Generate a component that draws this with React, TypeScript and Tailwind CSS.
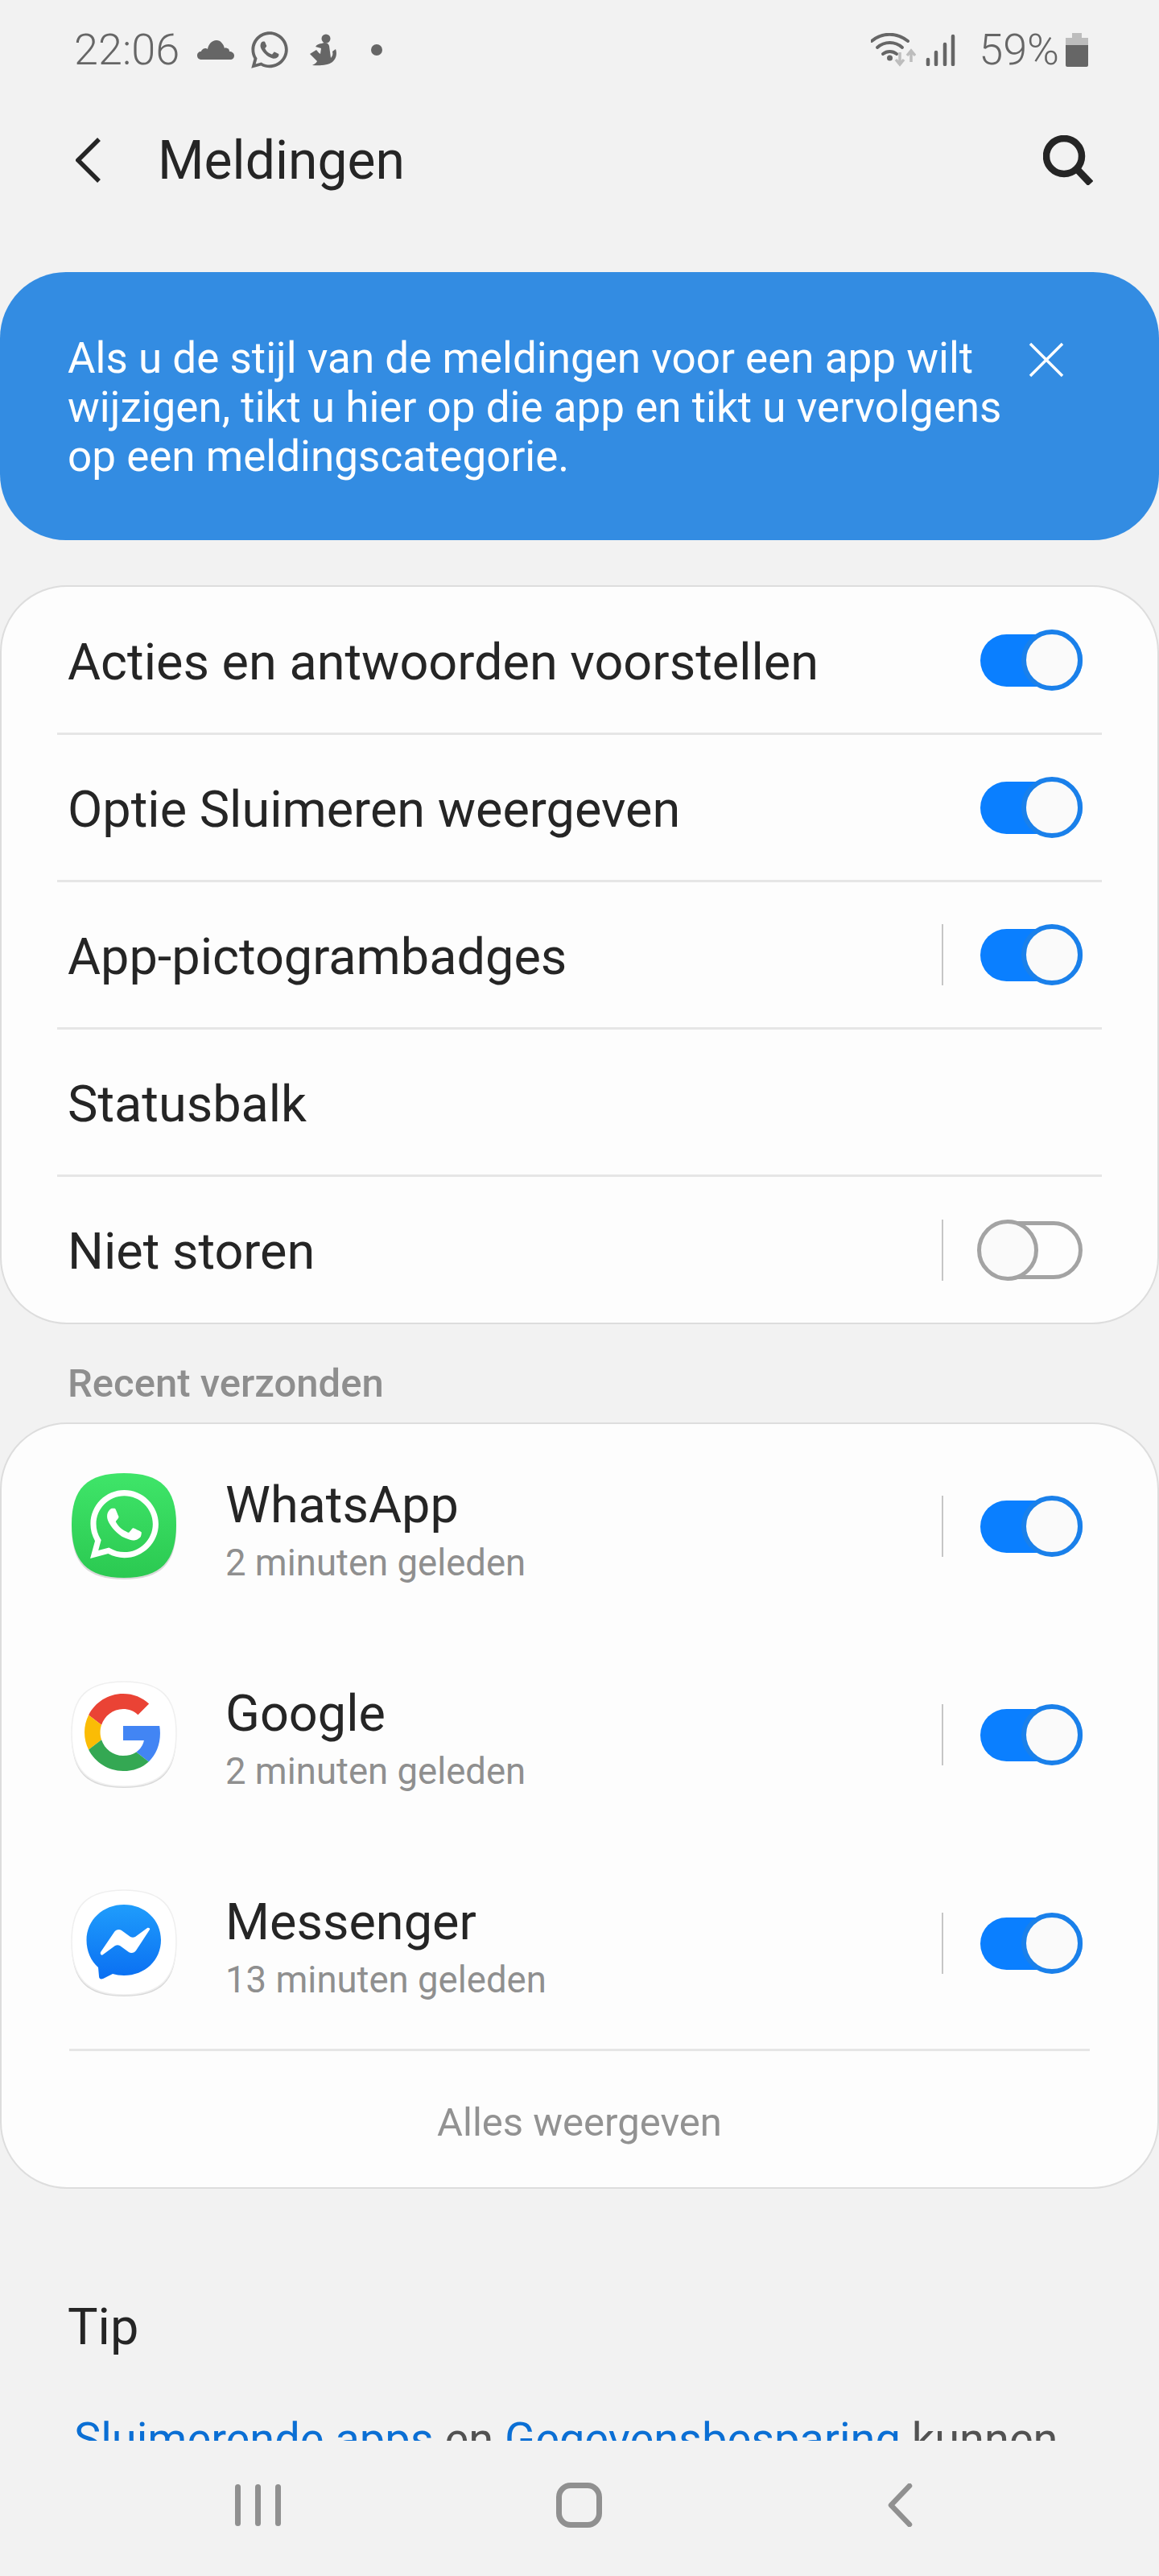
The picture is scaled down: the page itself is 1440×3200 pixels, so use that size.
import React from "react";
import { FaWhatsapp } from "react-icons/fa";

function Toggle({ on = true }: { on?: boolean }) {
  if (on) {
    return (
      <div className="relative h-[65px] w-[127px] shrink-0 rounded-full bg-[#0a7fff]">
        <div className="absolute right-0 top-[-6px] h-[76px] w-[76px] rounded-full border-[6px] border-[#1a80ea] bg-[#fafafa]" />
      </div>
    );
  }
  return (
    <div className="relative h-[72px] w-[127px] shrink-0 rounded-full border-[5px] border-[#a3a3a3] bg-[#fdfdfd]">
      <div className="absolute left-[-9px] top-[-7px] h-[76px] w-[76px] rounded-full border-[5px] border-[#a3a3a3] bg-[#fafafa]" />
    </div>
  );
}

function VBar() {
  return <div className="mr-[46px] h-[76px] w-[2px] shrink-0 bg-[#c6c6c6]" />;
}

function Row({ label, bar, on, toggle = true, last }: { label: string; bar?: boolean; on?: boolean; toggle?: boolean; last?: boolean }) {
  return (
    <div className={`mx-[69px] flex items-center pl-[13px] pr-[24px] ${last ? "h-[181px]" : "h-[183px] border-b-[3px] border-[#e6e6e6]"}`}>
      <div className="flex-1 pt-[5px] text-[63px] leading-[70px] text-[#252525]">{label}</div>
      {bar && <VBar />}
      {toggle && <Toggle on={on ?? true} />}
    </div>
  );
}

function Squircle({ fill, outline, children }: { fill: string; outline?: boolean; children?: React.ReactNode }) {
  return (
    <svg viewBox="0 0 132 134" className="h-[134px] w-[132px] shrink-0">
      <path d="M66 3C112 3 131 22 131 68C131 114 112 133 66 133C20 133 1 114 1 68C1 22 20 3 66 3Z" fill="#d9d9d9" />
      <path d="M66 1C112 1 131 20 131 65C131 110 112 131 66 131C20 131 1 110 1 65C1 20 20 1 66 1Z" fill={fill} stroke={outline ? "#efefef" : "none"} strokeWidth="1.500" />
      {children}
    </svg>
  );
}

function WhatsAppIcon() {
  return (
    <div className="relative h-[134px] w-[132px] shrink-0">
      <Squircle fill="url(#wg)">
        <defs>
          <linearGradient id="wg" x1="0" y1="0" x2="0" y2="1">
            <stop offset="0" stopColor="#3fe569" />
            <stop offset="1" stopColor="#2bc951" />
          </linearGradient>
        </defs>
      </Squircle>
      <FaWhatsapp className="absolute left-[18px] top-[16px] h-[97px] w-[97px] text-white" />
    </div>
  );
}

function GoogleIcon() {
  return (
    <Squircle fill="#ffffff" outline>
      <g transform="translate(17 16) scale(2)">
        <path fill="#EA4335" d="M24 9.5c3.54 0 6.71 1.22 9.21 3.6l6.85-6.85C35.9 2.38 30.47 0 24 0 14.62 0 6.51 5.38 2.56 13.22l7.98 6.19C12.43 13.72 17.74 9.5 24 9.5z" />
        <path fill="#4285F4" d="M46.98 24.55c0-1.57-.15-3.09-.38-4.55H24v9.02h12.94c-.58 2.96-2.26 5.48-4.78 7.18l7.73 6c4.51-4.18 7.09-10.36 7.09-17.65z" />
        <path fill="#FBBC05" d="M10.53 28.59c-.48-1.45-.76-2.99-.76-4.59s.27-3.14.76-4.59l-7.98-6.19C.92 16.46 0 20.12 0 24c0 3.88.92 7.54 2.56 10.78l7.97-6.19z" />
        <path fill="#34A853" d="M24 48c6.48 0 11.93-2.13 15.89-5.81l-7.73-6c-2.15 1.45-4.92 2.3-8.16 2.3-6.26 0-11.57-4.22-13.47-9.91l-7.98 6.19C6.51 42.62 14.62 48 24 48z" />
      </g>
    </Squircle>
  );
}

function MessengerIcon() {
  return (
    <Squircle fill="#ffffff" outline>
      <defs>
        <linearGradient id="mg" x1="0" y1="0" x2="0" y2="1">
          <stop offset="0" stopColor="#1f9dfc" />
          <stop offset="1" stopColor="#0a6ff2" />
        </linearGradient>
      </defs>
      <path d="M66 19C92 19 112 38 112 63C112 88 92 107 66 107C61 107 56 106 52 105L40 111C37 112 35 111 35 108L34 97C25 89 19.500 77 19.500 63C19.500 38 40 19 66 19Z" fill="url(#mg)" />
      <path d="M37 78L54 53C56 50 60 49 63 51L74 59C76 60 78 60 80 59L95 48C97 47 99 49 98 50L81 76C79 79 75 80 72 78L61 70C59 69 57 69 55 70L40 81C38 83 36 80 37 78Z" fill="#ffffff" />
    </Squircle>
  );
}

function AppRow({ icon, name, time }: { icon: React.ReactNode; name: string; time: string }) {
  return (
    <div className="flex h-[250px] items-center pl-[86px] pr-[93px]">
      {icon}
      <div className="ml-[60px] flex-1 pt-[12px]">
        <div className="text-[63px] leading-[72px] text-[#252525]">{name}</div>
        <div className="mt-[8px] text-[45.500px] leading-[56px] text-[#8f8f8f]">{time}</div>
      </div>
      <VBar />
      <Toggle />
    </div>
  );
}

export default function App() {
  return (
    <div className="flex h-[3200px] w-[1440px] flex-col overflow-hidden bg-[#f2f2f2] font-['Roboto',sans-serif]">
      {/* status bar */}
      <div className="flex h-[124px] shrink-0 items-center pl-[92px] pr-[88px] text-[#666666]">
        <span className="text-[54px] leading-[60px] font-light">22:06</span>
        <svg viewBox="0 0 46 26" className="ml-[22px] h-[26px] w-[46px]">
          <path d="M6 25C2 25 0 23 0 20C0 17 2 15 5 15C5 14 7 11 10 11C11 11 12 11 13 12C14 6 18 1 24 1C29 1 33 6 34 11C35 10 36 10 37 11C39 11 40 13 40 15C43 15 46 17 46 20C46 23 44 25 41 25Z" fill="#666666" />
        </svg>
        <FaWhatsapp className="ml-[18px] h-[52px] w-[52px] text-[#666666]" />
        <svg viewBox="0 0 34 40" className="ml-[24px] h-[40px] w-[34px]">
          <circle cx="20" cy="6" r="5.500" fill="#666666" />
          <path d="M15 12C18 10 23 11 24 15L26 30C28 28 29 25 28 22L32 19C34 24 33 31 28 35C23 39 12 40 3 39C7 37 8 36 9 34L0 25L8 20C10 22 11 24 13 25L14 18L7 16C9 13 12 12 15 12Z" fill="#666666" />
        </svg>
        <div className="ml-[42px] h-[14px] w-[14px] rounded-full bg-[#666666]" />
        <div className="flex-1" />
        <svg viewBox="0 0 56 42" className="h-[42px] w-[56px]">
          <g fill="none" stroke="#666666" strokeWidth="4" strokeLinecap="round">
            <path d="M1 10C14 -1 32 -1 46 10" />
            <path d="M8 18C17 10 30 10 39 18" />
            <path d="M15 26C20 22 27 22 32 26" />
          </g>
          <circle cx="23.500" cy="31" r="3.500" fill="#666666" />
          <g fill="none" stroke="#bdbdbd" strokeWidth="3.500">
            <path d="M36 24V38M31 33L36 39L41 33" />
            <path d="M50 36V24M45 28L50 22L55 28" />
          </g>
        </svg>
        <svg viewBox="0 0 37 40" className="ml-[12px] h-[40px] w-[37px]">
          <g stroke="#666666" strokeWidth="4.500" strokeLinecap="round">
            <path d="M3 32V38" />
            <path d="M13 23V38" />
            <path d="M24 13V38" />
            <path d="M34 3V38" />
          </g>
        </svg>
        <span className="ml-[29px] text-[54px] leading-[60px] font-light">59%</span>
        <svg viewBox="0 0 28 42" className="ml-[8px] h-[42px] w-[28px]">
          <path d="M8 0H20V6H28V15H0V6H8Z" fill="#bdbdbd" />
          <path d="M0 15H28V40C28 41 27 42 26 42H2C1 42 0 41 0 40Z" fill="#666666" />
        </svg>
      </div>

      {/* header */}
      <div className="flex h-[150px] shrink-0 items-center pl-[94px] pr-[82px]">
        <svg viewBox="0 0 32 56" className="h-[56px] w-[32px]">
          <path d="M30 2L4 28L30 54" fill="none" stroke="#252525" strokeWidth="5.500" transform="translate(-1 0)" />
        </svg>
        <span className="ml-[70px] flex-1 pt-[2px] text-[66px] leading-[80px] text-[#252525]">Meldingen</span>
        <svg viewBox="0 0 62 62" className="h-[62px] w-[62px]">
          <circle cx="26" cy="26" r="22" fill="none" stroke="#252525" strokeWidth="8.500" />
          <path d="M41 41L59 60" stroke="#252525" strokeWidth="9" />
        </svg>
      </div>

      {/* scroll content */}
      <div className="min-h-0 flex-1 overflow-hidden">
        <div className="mt-[64px] flex rounded-[82px] bg-[#338ce2] pb-[73px] pl-[84px] pr-[118px] pt-[77px] text-white">
          <div className="flex-1 text-[53px] leading-[61px]">
            Als u de stijl van de meldingen voor een app wilt
            <br />
            wijzigen, tikt u hier op die app en tikt u vervolgens
            <br />
            op een meldingscategorie.
          </div>
          <svg viewBox="0 0 44 44" className="mt-[10px] h-[44px] w-[44px] shrink-0">
            <path d="M2 2L42 42M42 2L2 42" stroke="#ffffff" strokeWidth="3.500" />
          </svg>
        </div>

        <div className="mt-[56px] rounded-[83px] border-2 border-[#dddddd] bg-[#fdfdfd] pt-[1px]">
          <Row label="Acties en antwoorden voorstellen" />
          <Row label="Optie Sluimeren weergeven" />
          <Row label="App-pictogrambadges" bar />
          <Row label="Statusbalk" toggle={false} />
          <Row label="Niet storen" bar on={false} last />
        </div>

        <div className="flex h-[122px] items-center pl-[84px] pt-[26px] text-[49px] leading-[56px] font-medium text-[#8e8e8e]">Recent verzonden</div>

        <div className="rounded-[83px] border-2 border-[#dddddd] bg-[#fdfdfd]">
          <div className="flex flex-col gap-[9px] pt-[2px]">
            <AppRow icon={<WhatsAppIcon />} name="WhatsApp" time="2 minuten geleden" />
            <AppRow icon={<GoogleIcon />} name="Google" time="2 minuten geleden" />
            <AppRow icon={<MessengerIcon />} name="Messenger" time="13 minuten geleden" />
          </div>
          <div className="mx-[84px] mt-[6px] h-[3px] bg-[#e6e6e6]" />
          <div className="flex h-[169px] items-center justify-center pt-[8px] text-[49px] text-[#929292]">Alles weergeven</div>
        </div>

        <div className="mt-[136px] pl-[84px] text-[63px] leading-[72px] text-[#252525]">Tip</div>
        <div className="mt-[70px] whitespace-nowrap pl-[92px] text-[56px] leading-[66px] text-[#525252]">
          <span className="text-[#0b6fd4]">Sluimerende apps</span> en <span className="text-[#0b6fd4]">Gegevensbesparing</span> kunnen
        </div>
      </div>

      {/* nav bar */}
      <div className="flex h-[168px] shrink-0 items-center pb-[8px] pl-[292px]">
        <div className="flex gap-[18px]">
          <div className="h-[52px] w-[7px] rounded-full bg-[#909090]" />
          <div className="h-[52px] w-[7px] rounded-full bg-[#909090]" />
          <div className="h-[52px] w-[7px] rounded-full bg-[#909090]" />
        </div>
        <div className="ml-[342px] h-[56px] w-[57px] rounded-[18px] border-[7px] border-[#909090]" />
        <svg viewBox="0 0 32 54" className="ml-[354px] h-[54px] w-[32px]">
          <path d="M28 3L5 27L28 51" fill="none" stroke="#909090" strokeWidth="6.500" strokeLinecap="round" strokeLinejoin="round" />
        </svg>
      </div>
    </div>
  );
}
